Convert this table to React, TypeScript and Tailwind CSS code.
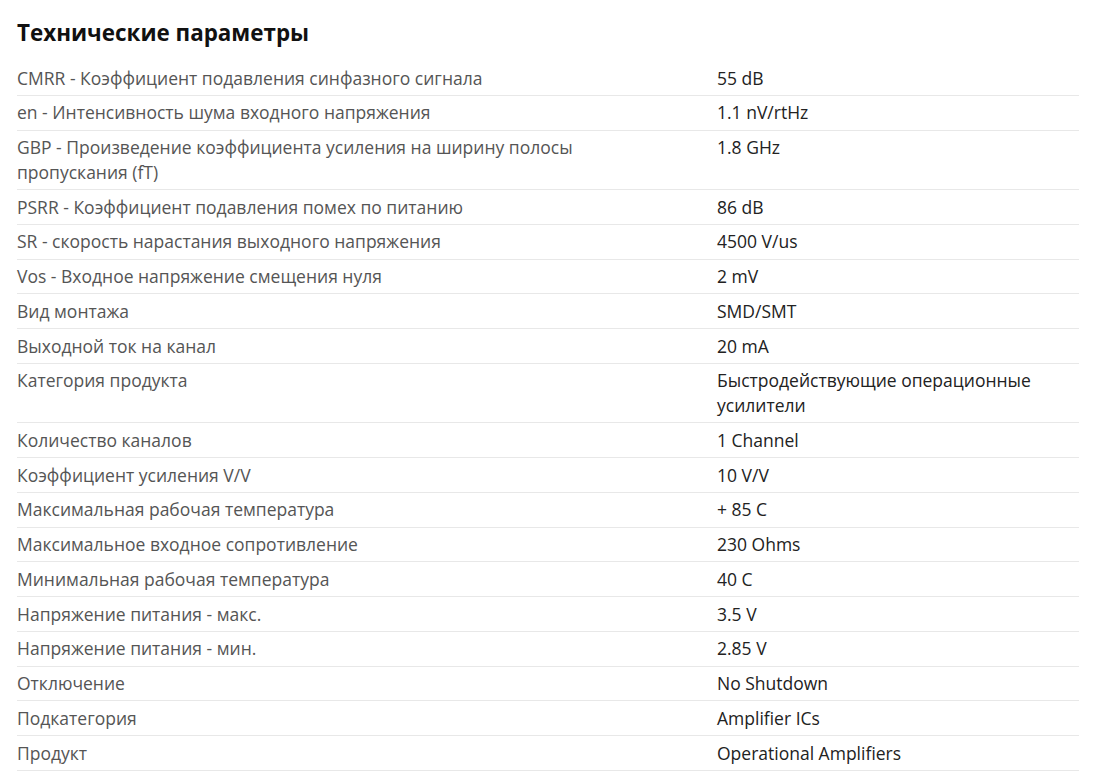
const rows: [string, string][] = [
  ['CMRR - Коэффициент подавления синфазного сигнала', '55 dB'],
  ['en - Интенсивность шума входного напряжения', '1.1 nV/rtHz'],
  ['GBP - Произведение коэффициента усиления на ширину полосы пропускания (fT)', '1.8 GHz'],
  ['PSRR - Коэффициент подавления помех по питанию', '86 dB'],
  ['SR - скорость нарастания выходного напряжения', '4500 V/us'],
  ['Vos - Входное напряжение смещения нуля', '2 mV'],
  ['Вид монтажа', 'SMD/SMT'],
  ['Выходной ток на канал', '20 mA'],
  ['Категория продукта', 'Быстродействующие операционные усилители'],
  ['Количество каналов', '1 Channel'],
  ['Коэффициент усиления V/V', '10 V/V'],
  ['Максимальная рабочая температура', '+ 85 C'],
  ['Максимальное входное сопротивление', '230 Ohms'],
  ['Минимальная рабочая температура', '40 C'],
  ['Напряжение питания - макс.', '3.5 V'],
  ['Напряжение питания - мин.', '2.85 V'],
  ['Отключение', 'No Shutdown'],
  ['Подкатегория', 'Amplifier ICs'],
  ['Продукт', 'Operational Amplifiers'],
];

export default function App() {
  return (
    <div className="min-h-screen bg-white px-[17px] pt-[17px] font-['Open_Sans',sans-serif]">
      <h2 className="mb-[13px] text-[22.4px] font-bold leading-[31px] text-[#111]">Технические параметры</h2>
      <div className="w-[1062px]">
        {rows.map(([label, value]) => (
          <div key={label} className="grid grid-cols-[700px_1fr] border-b border-[#e8e8e8] py-[4.5px] text-[17.5px] leading-[24.75px]">
            <div className="pr-[60px] text-[#555]">{label}</div>
            <div className="text-[#222]">{value}</div>
          </div>
        ))}
      </div>
    </div>
  );
}
